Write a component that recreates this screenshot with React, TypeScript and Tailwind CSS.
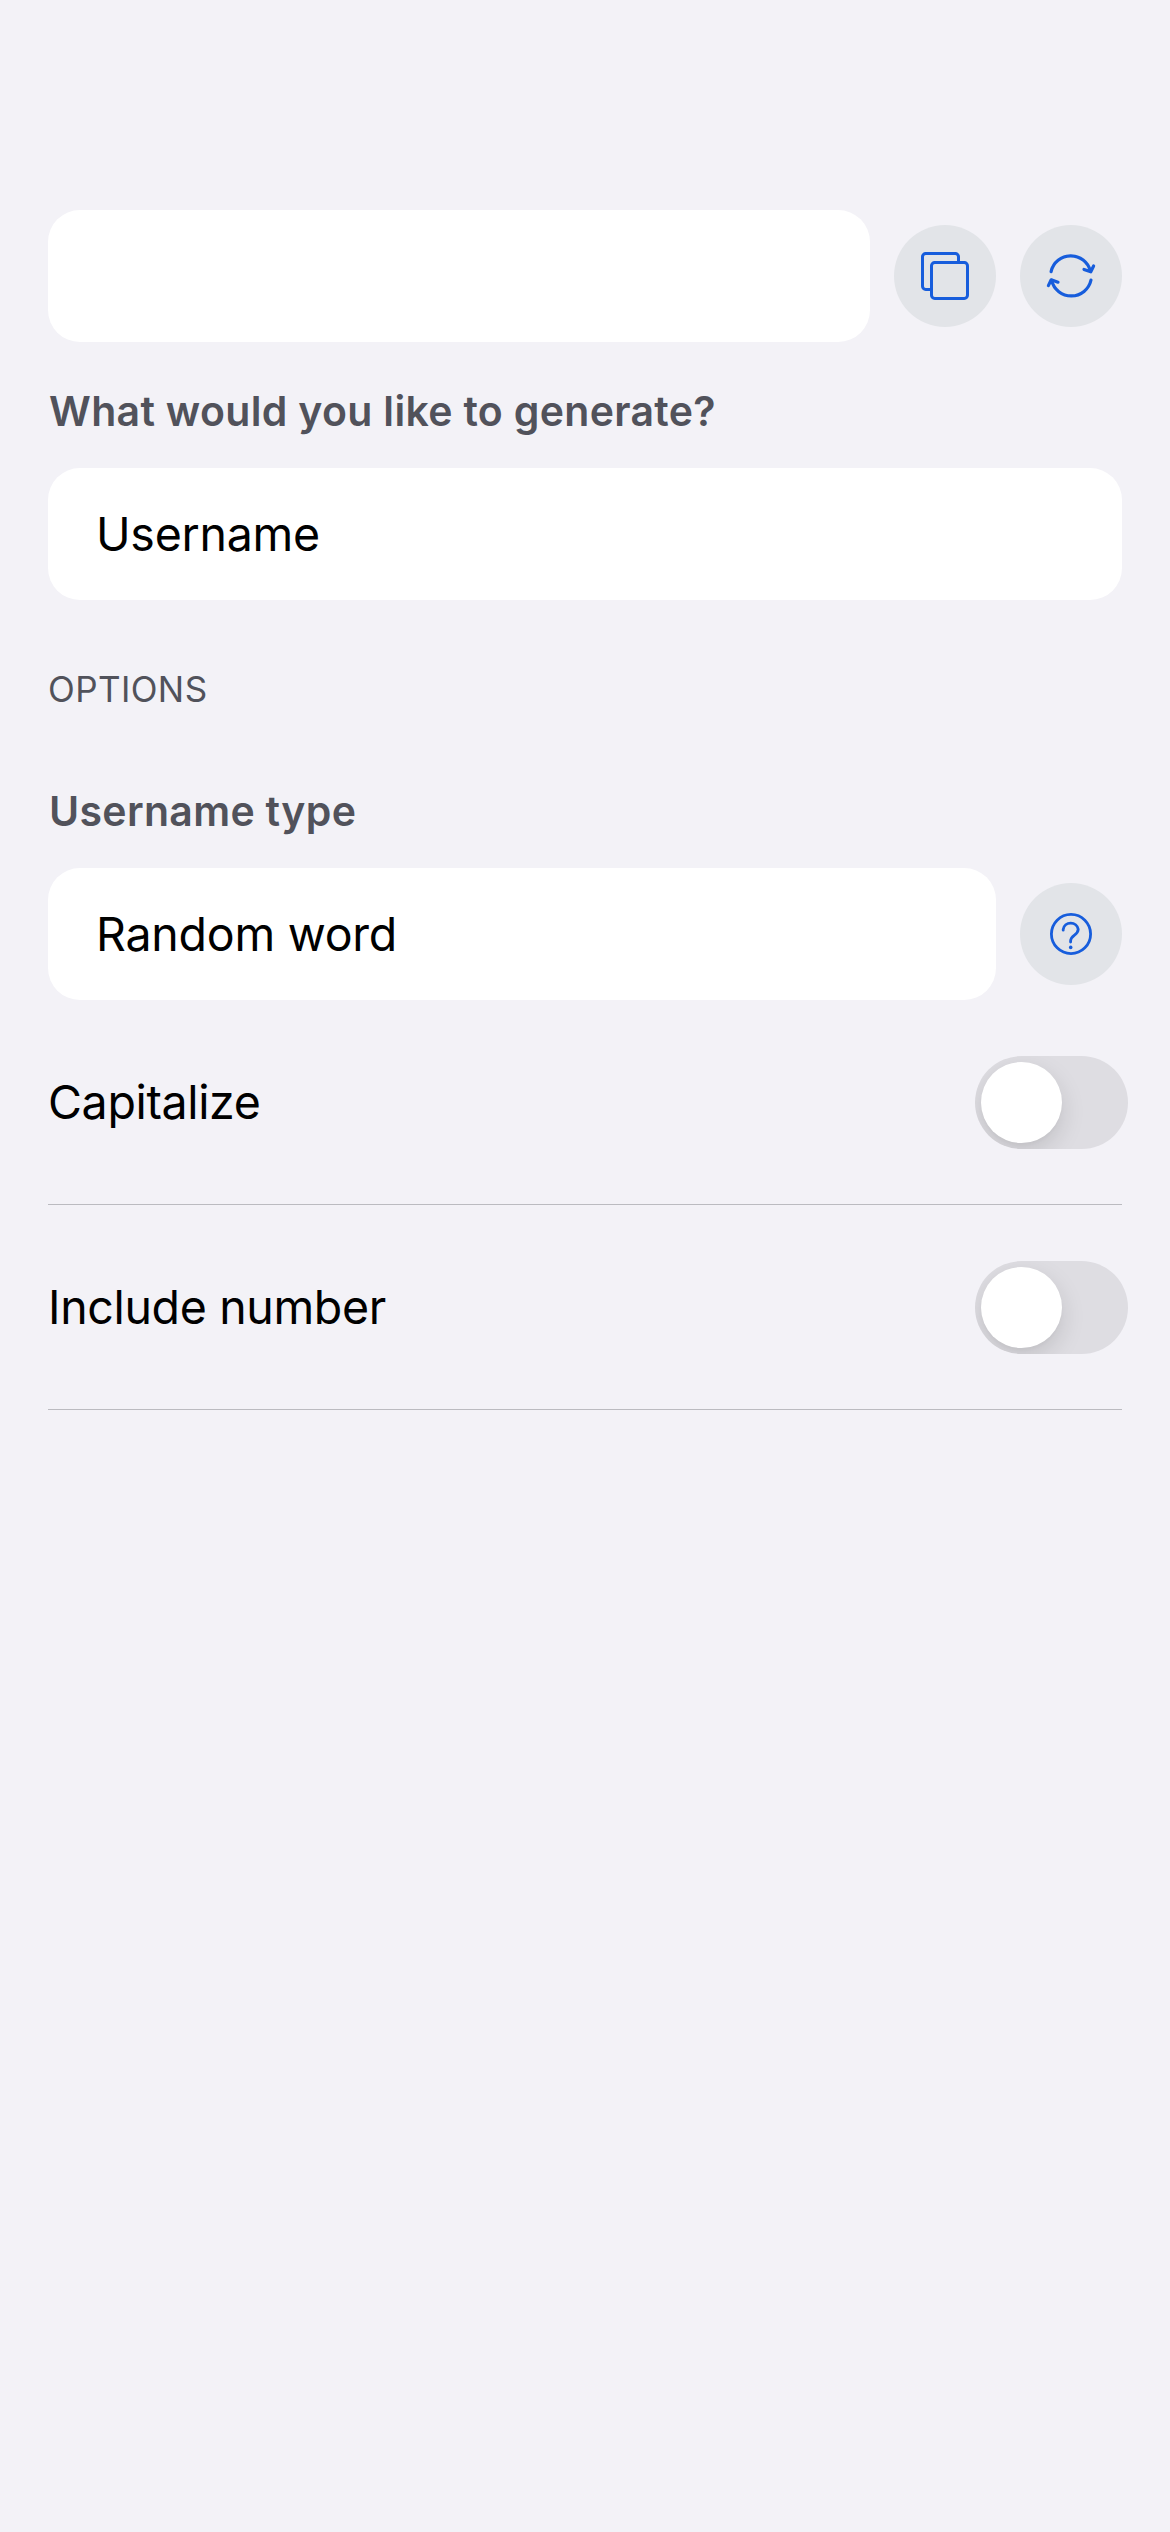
import type { ReactNode } from "react";

function CopyIcon() {
  return (
    <svg className="size-full" viewBox="0 0 102 102" fill="none" stroke="currentColor" strokeWidth="3">
      <rect x="37.5" y="37.5" width="36" height="36" rx="3.2" />
      <path d="M37.5 64.5H31.7a3.2 3.2 0 0 1-3.2-3.2V31.7a3.2 3.2 0 0 1 3.2-3.2H61.3a3.2 3.2 0 0 1 3.2 3.2V37.5" />
    </svg>
  );
}

function RefreshIcon() {
  return (
    <svg
      className="size-full"
      viewBox="0 0 102 102"
      fill="none"
      stroke="currentColor"
      strokeWidth="3.2"
      strokeLinecap="round"
      strokeLinejoin="round"
    >
      <path d="M31.1 46.6A20.2 20.2 0 0 1 70.4 46.2" />
      <path d="M64 44.4L70.8 46.8L73.6 41" />
      <path d="M71 55A20.2 20.2 0 0 1 31.6 55.4" />
      <path d="M38 57.2L31.2 54.8L28.4 60.6" />
    </svg>
  );
}

function HelpIcon() {
  return (
    <svg
      className="size-full"
      viewBox="0 0 102 102"
      fill="none"
      stroke="currentColor"
      strokeWidth="2.8"
      strokeLinecap="round"
    >
      <circle cx="51" cy="51" r="19.6" />
      <path d="M43.2 47.2V46.4A7.6 7.4 0 0 1 58.2 46.3C58.2 49.3 56.6 50.7 54.2 52.4C51.8 54.2 50.6 55.4 50.6 58V59" />
      <circle cx="50.7" cy="64.4" r="1.8" fill="currentColor" stroke="none" />
    </svg>
  );
}

function RoundButton({ label, children }: { label: string; children: ReactNode }) {
  return (
    <button aria-label={label} className="size-[102px] shrink-0 rounded-full bg-[#e2e4e8] text-[#175ddc]">
      {children}
    </button>
  );
}

function Field({ value }: { value?: string }) {
  return (
    <div className="flex h-[132px] flex-1 items-center rounded-[32px] bg-white px-12 text-[46.5px] leading-none tracking-[-0.25px]">
      {value}
    </div>
  );
}

function Label({ children }: { children: ReactNode }) {
  return (
    <h2 className="h-[50px] pl-px text-[41px] leading-[50px] font-semibold tracking-[0.32px] text-[#51525b]">
      {children}
    </h2>
  );
}

function ToggleRow({ label }: { label: string }) {
  return (
    <div className="flex h-[205px] items-center justify-between border-b border-[#bbbbc0]">
      <span className="text-[46.5px] leading-none tracking-[-0.35px]">{label}</span>
      <button
        role="switch"
        aria-checked="false"
        aria-label={label}
        className="mt-px -mr-1.5 flex h-[93px] w-[153px] items-center overflow-hidden rounded-full bg-[#dedde2] px-1.5"
      >
        <span className="size-[81px] rounded-full bg-white shadow-[0_9px_24px_rgba(0,0,0,0.13),0_3px_3px_rgba(0,0,0,0.02)]" />
      </button>
    </div>
  );
}

export default function App() {
  return (
    <main className="min-h-screen bg-[#f3f2f7] px-12 pt-[210px] font-['Inter',sans-serif] text-black">
      <div className="flex items-center gap-6">
        <Field />
        <RoundButton label="Copy">
          <CopyIcon />
        </RoundButton>
        <RoundButton label="Regenerate">
          <RefreshIcon />
        </RoundButton>
      </div>

      <div className="mt-11 flex flex-col gap-8">
        <Label>What would you like to generate?</Label>
        <div className="flex">
          <Field value="Username" />
        </div>
      </div>

      <p className="mt-[67px] h-[44px] text-[35px] leading-[44px] tracking-[0.4px] text-[#51525b]">OPTIONS</p>

      <div className="mt-[75px] flex flex-col gap-8">
        <Label>Username type</Label>
        <div className="flex items-center gap-6">
          <Field value="Random word" />
          <RoundButton label="Help">
            <HelpIcon />
          </RoundButton>
        </div>
      </div>

      <ToggleRow label="Capitalize" />
      <ToggleRow label="Include number" />
    </main>
  );
}
